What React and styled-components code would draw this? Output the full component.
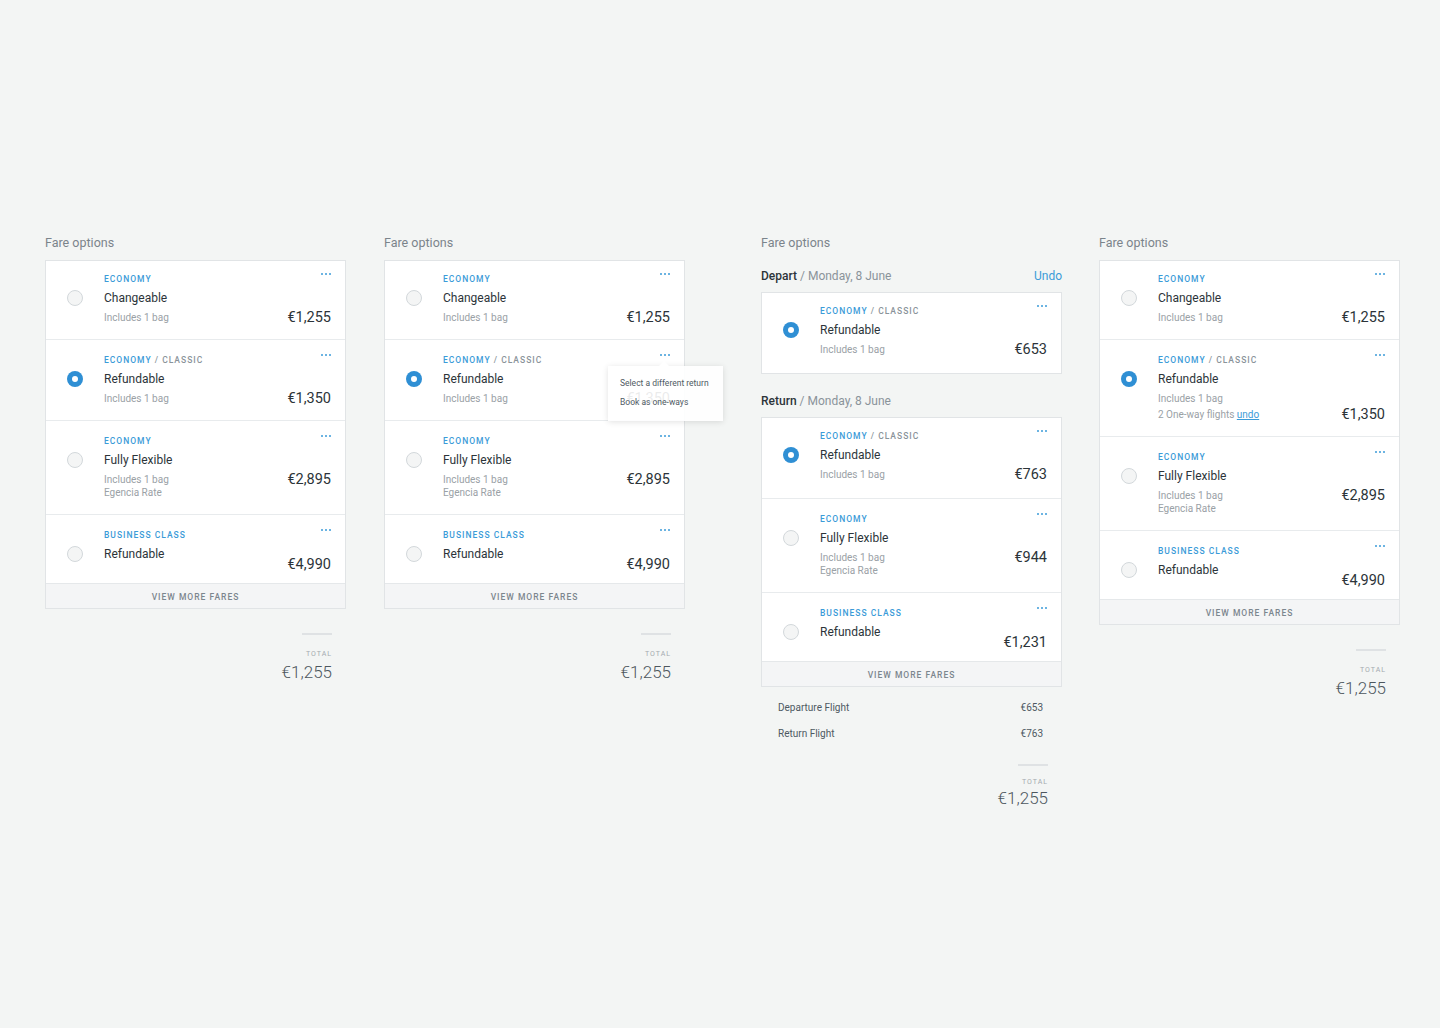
import styled, { createGlobalStyle } from "styled-components";

const GlobalStyle = createGlobalStyle`
  body {
    margin: 0;
    background: #f3f5f4;
    font-family: Roboto, "Liberation Sans", sans-serif;
  }
`;

const Page = styled.div`
  display: flex;
  gap: 76px;
  padding: 235px 0 0 45px;
  min-height: 1028px;
  box-sizing: border-box;
`;

const Group = styled.div`
  display: flex;
  gap: ${props => props.gap}px;
  align-items: flex-start;
`;

const Column = styled.div`
  width: 301px;
  display: flex;
  flex-direction: column;
`;

const Heading = styled.div`
  font-size: 12.5px;
  line-height: 16px;
  color: #7b848b;
  margin-bottom: 9px;
`;

const SectionHead = styled.div`
  display: flex;
  justify-content: space-between;
  font-size: 12px;
  line-height: 16px;
  color: #8a939a;
  margin: ${props => props.top}px 0 8px;
  b { font-weight: 500; color: #2c3439; }
`;

const Undo = styled.span`
  color: #3b9bd8;
`;

const Row = styled.div`
  display: flex;
  padding: 14px 14px 15px 0;
  min-height: 39px;
  border-top: 1px solid #e8ebed;
  &:first-child {
    border-top: none;
    padding-top: 12px;
  }
`;

const Card = styled.div`
  background: #fff;
  border: 1px solid #e1e4e6;
  ${Row}:first-child {
    padding-bottom: ${props => (props.roomy ? 17 : 15)}px;
  }
`;

const RadioCell = styled.div`
  width: 58px;
  display: flex;
  justify-content: center;
  align-items: flex-start;
  padding-top: 17px;
`;

const Radio = styled.div`
  width: 16px;
  height: 16px;
  box-sizing: border-box;
  border-radius: 50%;
  display: flex;
  align-items: center;
  justify-content: center;
  background: ${props => (props.on ? "#2f8fd4" : "#f4f5f5")};
  border: ${props => (props.on ? "none" : "1px solid #d3d8db")};
  &::after {
    content: "";
    display: ${props => (props.on ? "block" : "none")};
    width: 6px;
    height: 6px;
    border-radius: 50%;
    background: #fff;
  }
`;

const Content = styled.div`
  flex: 1;
`;

const Label = styled.div`
  font-size: 8.5px;
  line-height: 12px;
  font-weight: 500;
  letter-spacing: 1px;
  text-transform: uppercase;
  color: #3b9bd8;
  margin-bottom: 5px;
  span { color: #8a939a; }
`;

const Title = styled.div`
  font-size: 12px;
  line-height: 16px;
  color: #2c3439;
  margin-bottom: 5px;
`;

const Detail = styled.div`
  font-size: 10px;
  line-height: 13px;
  color: #9aa1a6;
  margin-top: ${props => props.gap || 0}px;
  a { color: #3b9bd8; text-decoration: underline; }
`;

const Side = styled.div`
  display: flex;
  flex-direction: column;
  justify-content: space-between;
  align-items: flex-end;
`;

const Dots = styled.div`
  position: relative;
  display: flex;
  gap: 2px;
  span {
    width: 2px;
    height: 2px;
    border-radius: 50%;
    background: #3b9bd8;
  }
`;

const Price = styled.div`
  font-size: 14.5px;
  line-height: 13px;
  color: #2c3439;
  margin-bottom: ${props => props.raise || 0}px;
`;

const Popup = styled.div`
  position: absolute;
  top: 12px;
  right: -53px;
  width: 115px;
  box-sizing: border-box;
  padding: 8px 12px 9px;
  background: rgba(255, 255, 255, 0.9);
  box-shadow: 0 1px 6px rgba(0, 0, 0, 0.12);
  font-size: 8.5px;
  line-height: 19px;
  color: #4f5a63;
  white-space: nowrap;
  z-index: 2;
  &::before {
    content: "";
    position: absolute;
    top: -5px;
    right: 54px;
    border-left: 5px solid transparent;
    border-right: 5px solid transparent;
    border-bottom: 5px solid #fff;
  }
`;

const ViewMore = styled.div`
  border-top: 1px solid #e5e8ea;
  background: #f4f5f6;
  text-align: center;
  padding-top: 3px;
  font-size: 8.5px;
  line-height: 21px;
  font-weight: 500;
  letter-spacing: 1px;
  color: #7c868e;
`;

const Summary = styled.div`
  margin-top: 8px;
`;

const SummaryRow = styled.div`
  display: flex;
  justify-content: space-between;
  padding: 0 19px 0 17px;
  font-size: 10px;
  line-height: 26px;
  color: #4e5962;
`;

const Totals = styled.div`
  display: flex;
  flex-direction: column;
  align-items: flex-end;
  padding-right: 14px;
  margin-top: ${props => props.top}px;
`;

const Rule = styled.div`
  width: 30px;
  height: 2px;
  background: #dfe2e4;
`;

const TotalLabel = styled.div`
  margin-top: ${props => (props.tight ? 11 : 14)}px;
  font-size: 7px;
  line-height: 10px;
  letter-spacing: 1px;
  color: #a3aaaf;
`;

const TotalPrice = styled.div`
  margin-top: ${props => (props.tight ? 0 : 2)}px;
  font-size: 17px;
  line-height: 22px;
  font-weight: 300;
  color: #4d575e;
`;

function Fare({ fare, menu }) {
  return (
    <Row>
      <RadioCell>
        <Radio on={fare.on} />
      </RadioCell>
      <Content>
        <Label>
          {fare.label}
          {fare.sub && <span> / {fare.sub}</span>}
        </Label>
        <Title>{fare.title}</Title>
        {fare.lines.map((l, i) => (
          <Detail key={i} gap={i > 0 ? fare.lineGap : 0}>{l}</Detail>
        ))}
      </Content>
      <Side>
        <Dots>
          <span />
          <span />
          <span />
          {menu && (
            <Popup>
              <div>Select a different return</div>
              <div>Book as one-ways</div>
            </Popup>
          )}
        </Dots>
        <Price raise={fare.raise}>{fare.price}</Price>
      </Side>
    </Row>
  );
}

const bag = "Includes 1 bag";

const baseFares = [
  { label: "Economy", title: "Changeable", lines: [bag], price: "€1,255" },
  { label: "Economy", sub: "Classic", title: "Refundable", lines: [bag], price: "€1,350", on: true },
  { label: "Economy", title: "Fully Flexible", lines: [bag, "Egencia Rate"], price: "€2,895", raise: 13 },
  { label: "Business Class", title: "Refundable", lines: [], price: "€4,990", raise: -3 },
];

const oneWayFares = baseFares.map((f, i) =>
  i === 1
    ? { ...f, lineGap: 3, lines: [bag, <>2 One-way flights <a>undo</a></>] }
    : f
);

const returnFares = [
  { label: "Economy", sub: "Classic", title: "Refundable", lines: [bag], price: "€763", on: true },
  { label: "Economy", title: "Fully Flexible", lines: [bag, "Egencia Rate"], price: "€944", raise: 13 },
  { label: "Business Class", title: "Refundable", lines: [], price: "€1,231", raise: -3 },
];

function Total({ top, tight }) {
  return (
    <Totals top={top}>
      <Rule />
      <TotalLabel tight={tight}>TOTAL</TotalLabel>
      <TotalPrice tight={tight}>€1,255</TotalPrice>
    </Totals>
  );
}

function FareColumn({ fares, menuAt }) {
  return (
    <Column>
      <Heading>Fare options</Heading>
      <Card>
        {fares.map((f, i) => (
          <Fare key={i} fare={f} menu={menuAt === i} />
        ))}
        <ViewMore>VIEW MORE FARES</ViewMore>
      </Card>
      <Total top={24} />
    </Column>
  );
}

export default function App() {
  return (
    <>
      <GlobalStyle />
      <Page>
        <Group gap={38}>
          <FareColumn fares={baseFares} />
          <FareColumn fares={baseFares} menuAt={1} />
        </Group>
        <Group gap={37}>
          <Column>
            <Heading>Fare options</Heading>
            <SectionHead top={8}>
              <div>
                <b>Depart</b> / Monday, 8 June
              </div>
              <Undo>Undo</Undo>
            </SectionHead>
            <Card roomy>
              <Fare fare={{ label: "Economy", sub: "Classic", title: "Refundable", lines: [bag], price: "€653", on: true }} />
            </Card>
            <SectionHead top={19}>
              <div>
                <b>Return</b> / Monday, 8 June
              </div>
            </SectionHead>
            <Card roomy>
              {returnFares.map((f, i) => (
                <Fare key={i} fare={f} />
              ))}
              <ViewMore>VIEW MORE FARES</ViewMore>
            </Card>
            <Summary>
              <SummaryRow>
                <span>Departure Flight</span>
                <span>€653</span>
              </SummaryRow>
              <SummaryRow>
                <span>Return Flight</span>
                <span>€763</span>
              </SummaryRow>
            </Summary>
            <Total top={17} tight />
          </Column>
          <FareColumn fares={oneWayFares} />
        </Group>
      </Page>
    </>
  );
}
